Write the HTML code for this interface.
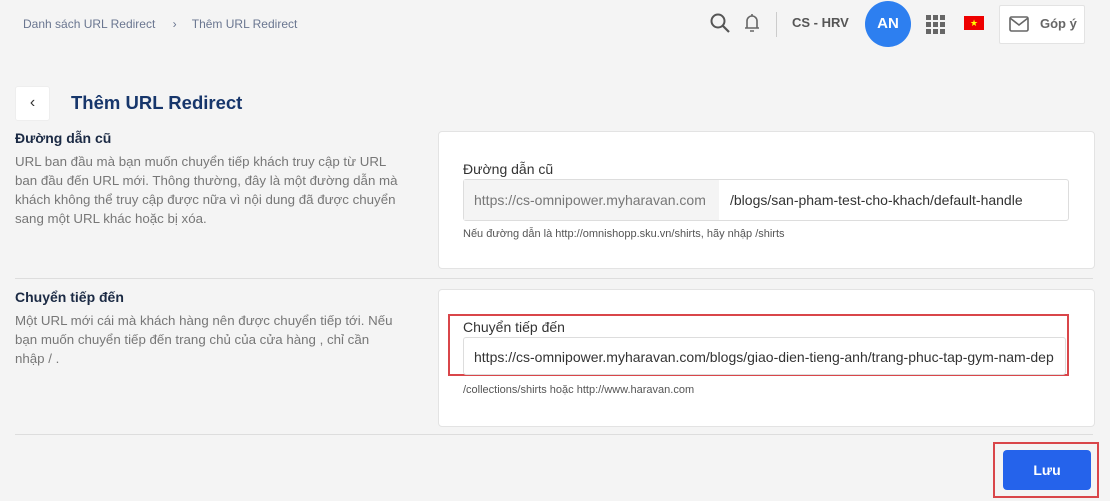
<!DOCTYPE html>
<html><head><meta charset="utf-8"><style>
body{margin:0;width:1110px;height:501px;background:#f4f4f4;font-family:"Liberation Sans",sans-serif;position:relative;overflow:hidden}
.a{position:absolute}
.card{position:absolute;background:#fff;border:1px solid #e3e3e3;border-radius:4px}
.desc{color:#777;font-size:13.3px;line-height:19px;white-space:nowrap}
.h{color:#1b2a44;font-weight:bold;font-size:14px}
</style></head><body>
<div class="a" style="left:23px;top:17px;font-size:12px;color:#6a7690">Danh sách URL Redirect <span style="margin:0 12px 0 14px">›</span> Thêm URL Redirect</div>
<svg class="a" style="left:709px;top:12px" width="22" height="22" viewBox="0 0 22 22"><circle cx="9" cy="9" r="6.5" fill="none" stroke="#555" stroke-width="2"/><path d="M14 14l6 6" stroke="#555" stroke-width="2.2"/></svg>
<svg class="a" style="left:742px;top:12px" width="20" height="22" viewBox="0 0 20 22"><path d="M5 16V9a5 5 0 0110 0v7M3 16h14M8 19h4M10 2v2" fill="none" stroke="#666" stroke-width="1.6"/></svg>
<div class="a" style="left:776px;top:12px;width:1px;height:25px;background:#ccc"></div>
<div class="a" style="left:792px;top:15px;font-size:13px;font-weight:bold;color:#555">CS - HRV</div>
<div class="a" style="left:865px;top:1px;width:46px;height:46px;border-radius:50%;background:#2d7ff0;color:#fff;font-weight:bold;font-size:15px;text-align:center;line-height:46px">AN</div>
<svg class="a" style="left:926px;top:15px" width="19" height="19"><g fill="#666"><rect x="0" y="0" width="5" height="5"/><rect x="7" y="0" width="5" height="5"/><rect x="14" y="0" width="5" height="5"/><rect x="0" y="7" width="5" height="5"/><rect x="7" y="7" width="5" height="5"/><rect x="14" y="7" width="5" height="5"/><rect x="0" y="14" width="5" height="5"/><rect x="7" y="14" width="5" height="5"/><rect x="14" y="14" width="5" height="5"/></g></svg>
<div class="a" style="left:964px;top:16px;width:20px;height:14px;background:#e00;color:#ff0;font-size:9px;text-align:center;line-height:14px">★</div>
<div class="card" style="left:999px;top:5px;width:84px;height:37px;border-radius:2px"></div>
<svg class="a" style="left:1009px;top:16px" width="20" height="16"><rect x="1" y="1" width="18" height="14" rx="1.5" fill="none" stroke="#666" stroke-width="1.6"/><path d="M1 2l9 7 9-7" fill="none" stroke="#666" stroke-width="1.6"/></svg>
<div class="a" style="left:1040px;top:16px;font-size:13px;font-weight:bold;color:#666">Góp ý</div>
<div class="card" style="left:15px;top:86px;width:33px;height:33px;border-radius:3px;border-color:#eee;text-align:center;line-height:31px;color:#333;font-size:16px">‹</div>
<div class="a" style="left:71px;top:92px;font-size:18.5px;font-weight:bold;color:#17366b">Thêm URL Redirect</div>
<div class="a h" style="left:15px;top:130px">Đường dẫn cũ</div>
<div class="a desc" style="left:15px;top:152px">URL ban đầu mà bạn muốn chuyển tiếp khách truy cập từ URL<br>ban đầu đến URL mới. Thông thường, đây là một đường dẫn mà<br>khách không thể truy cập được nữa vì nội dung đã được chuyển<br>sang một URL khác hoặc bị xóa.</div>
<div class="card" style="left:438px;top:131px;width:655px;height:136px"></div>
<div class="a" style="left:463px;top:161px;font-size:14px;color:#333">Đường dẫn cũ</div>
<div class="a" style="left:463px;top:179px;width:604px;height:40px;border:1px solid #ddd;border-radius:3px;background:#fff"></div>
<div class="a" style="left:464px;top:180px;width:255px;height:40px;background:#f4f4f4;color:#777;font-size:14px;line-height:40px;padding-left:10px;box-sizing:border-box">https://cs-omnipower.myharavan.com</div>
<div class="a" style="left:730px;top:192px;font-size:14px;color:#333">/blogs/san-pham-test-cho-khach/default-handle</div>
<div class="a" style="left:463px;top:228px;font-size:11px;color:#555">Nếu đường dẫn là http://omnishopp.sku.vn/shirts, hãy nhập /shirts</div>
<div class="a" style="left:15px;top:278px;width:1078px;height:1px;background:#ddd"></div>
<div class="a h" style="left:15px;top:289px">Chuyển tiếp đến</div>
<div class="a desc" style="left:15px;top:311px">Một URL mới cái mà khách hàng nên được chuyển tiếp tới. Nếu<br>bạn muốn chuyển tiếp đến trang chủ của cửa hàng , chỉ cần<br>nhập / .</div>
<div class="card" style="left:438px;top:289px;width:655px;height:136px"></div>
<div class="a" style="left:448px;top:314px;width:621px;height:62px;border:2px solid #d9464a;box-sizing:border-box"></div>
<div class="a" style="left:463px;top:319px;font-size:14px;color:#333">Chuyển tiếp đến</div>
<div class="a" style="left:463px;top:337px;width:603px;height:38px;border:1px solid #ddd;border-radius:3px;overflow:hidden;white-space:nowrap;font-size:14px;line-height:38px;padding-left:10px;box-sizing:border-box;color:#333">https://cs-omnipower.myharavan.com/blogs/giao-dien-tieng-anh/trang-phuc-tap-gym-nam-dep</div>
<div class="a" style="left:463px;top:384px;font-size:11px;color:#555">/collections/shirts hoặc http://www.haravan.com</div>
<div class="a" style="left:15px;top:434px;width:1078px;height:1px;background:#ddd"></div>
<div class="a" style="left:993px;top:442px;width:106px;height:56px;border:2px solid #d9464a;box-sizing:border-box"></div>
<div class="a" style="left:1003px;top:450px;width:88px;height:40px;background:#2563eb;border-radius:4px;color:#fff;font-weight:bold;font-size:14px;text-align:center;line-height:40px">Lưu</div>
</body></html>
